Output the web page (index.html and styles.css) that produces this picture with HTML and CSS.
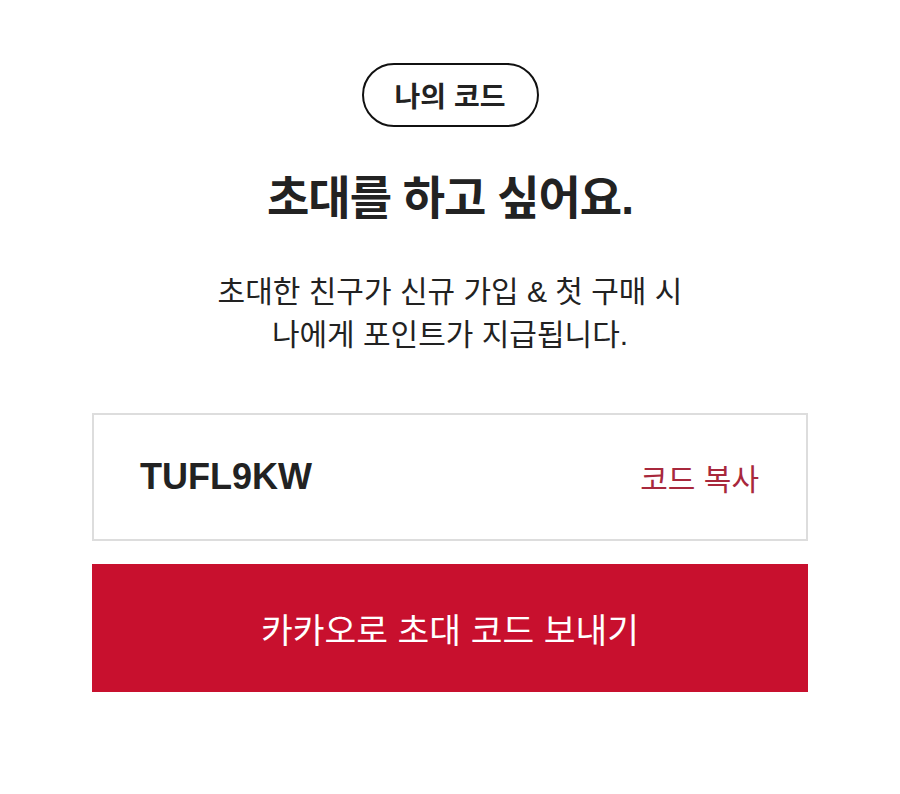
FILE: index.html
```html
<!DOCTYPE html>
<html lang="ko">
<head>
<meta charset="utf-8">
<title>나의 코드</title>
<link rel="stylesheet" href="styles.css">
</head>
<body>
<main class="page">
  <div class="pill">나의 코드</div>
  <h1 class="title">초대를 하고 싶어요.</h1>
  <p class="desc">초대한 친구가 신규 가입 &amp; 첫 구매 시<br>나에게 포인트가 지급됩니다.</p>
  <div class="code-box">
    <span class="code">TUFL9KW</span>
    <button class="copy" type="button">코드 복사</button>
  </div>
  <button class="kakao" type="button">카카오로 초대 코드 보내기</button>
</main>
</body>
</html>
```

FILE: styles.css
```css
html, body {
  margin: 0;
  padding: 0;
  background: #fff;
}
body {
  font-family: "Liberation Sans", "Noto Sans CJK KR", sans-serif;
  color: #222;
}
.page {
  width: 716px;
  margin: 0 auto;
  padding-top: 63px;
  display: flex;
  flex-direction: column;
  align-items: center;
}
.pill {
  box-sizing: border-box;
  width: 177px;
  height: 64px;
  border: 2px solid #111;
  border-radius: 32px;
  display: flex;
  align-items: center;
  justify-content: center;
  font-size: 28px;
  font-weight: 700;
  color: #222;
}
.title {
  margin: 47px 0 0;
  font-size: 46px;
  line-height: 48px;
  font-weight: 700;
  letter-spacing: -1px;
  color: #222;
}
.desc {
  margin: 48px 0 0;
  font-size: 30px;
  line-height: 43px;
  text-align: center;
  color: #222;
}
.code-box {
  box-sizing: border-box;
  width: 100%;
  height: 128px;
  margin-top: 57px;
  border: 2px solid #ddd;
  padding: 0 47px 0 46px;
  display: flex;
  align-items: center;
  justify-content: space-between;
}
.code {
  font-size: 36px;
  font-weight: 700;
  color: #222;
}
.copy {
  border: 0;
  background: none;
  padding: 0;
  font-family: inherit;
  font-size: 30px;
  color: #a8283c;
}
.kakao {
  width: 100%;
  height: 128px;
  margin-top: 23px;
  border: 0;
  background: #c8102e;
  color: #fff;
  font-family: inherit;
  font-size: 34.5px;
  padding: 0;
}
```
